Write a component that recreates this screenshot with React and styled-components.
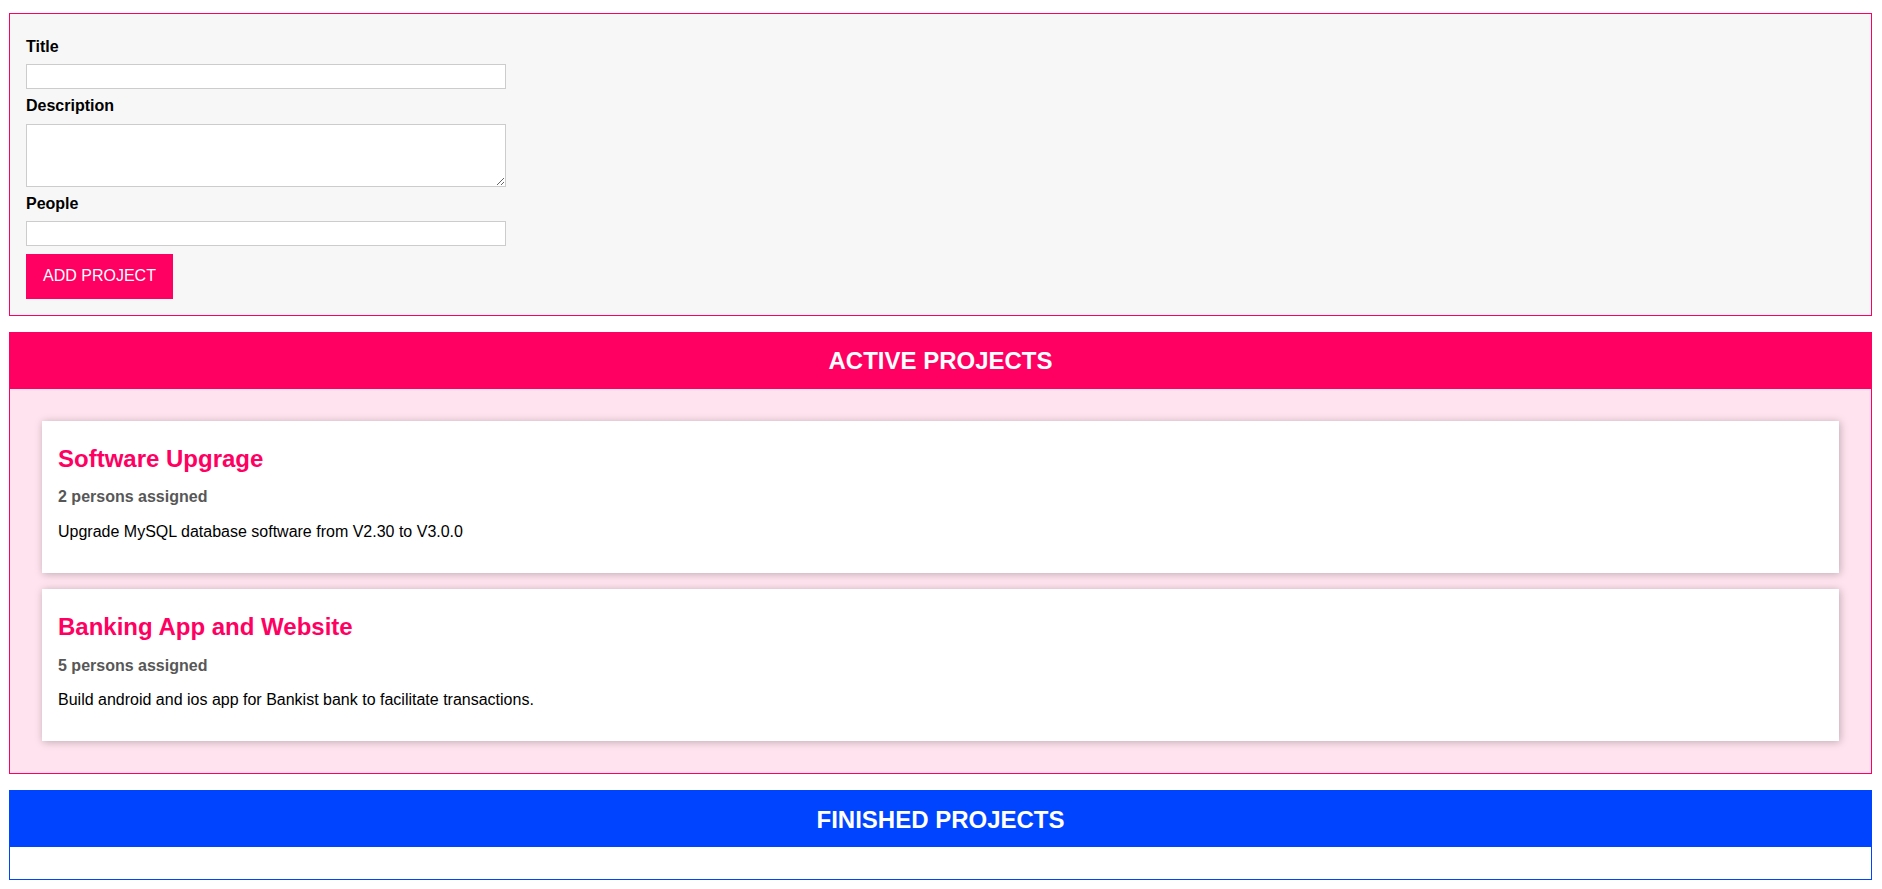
import React from 'react'
import styled, { createGlobalStyle } from 'styled-components'

const GlobalStyle = createGlobalStyle`
    * {
        box-sizing: border-box;
    }
    html {
        font-family: "Liberation Sans", Arial, sans-serif;
        line-height: 1.15;
    }
    body {
        margin: 0;
    }
`

const Page = styled.div`
    display: flex;
    flex-direction: column;
    gap: 16px;
    padding: 13px 10px 16px 9px;
`

const Form = styled.form`
    border: 1px solid #ff0062;
    background: #f7f7f7;
    padding: 16px;
`

const Label = styled.label`
    display: block;
    margin: 8px 0;
    font-weight: bold;
    font-size: 16px;
    line-height: 18.4px;
    color: #000;
`

const Input = styled.input`
    display: block;
    width: 100%;
    max-width: 480px;
    height: 25px;
    margin: 8px 0;
    padding: 3px 6px;
    font: inherit;
    border: 1px solid #ccc;
    background: #fff;
    &:focus {
        outline: none;
        background: #fff5f9;
    }
`

const TextArea = styled.textarea`
    display: block;
    width: 100%;
    max-width: 480px;
    height: 63px;
    margin: 8px 0;
    padding: 3px 6px;
    font: inherit;
    border: 1px solid #ccc;
    background: #fff;
    &:focus {
        outline: none;
        background: #fff5f9;
    }
`

const Button = styled.button`
    display: inline-block;
    vertical-align: top;
    font: inherit;
    font-size: 16px;
    line-height: 18.4px;
    background: #ff0062;
    border: 1px solid #ff0062;
    color: white;
    padding: 12px 16px;
    cursor: pointer;
`

const Section = styled.section`
    border: 1px solid ${props => props.color};
`

const Header = styled.header`
    background: ${props => props.color};
    height: 56px;
    display: flex;
    justify-content: center;
    align-items: center;
`

const Heading = styled.h2`
    margin: 0;
    color: white;
    font-size: 24px;
    font-weight: bold;
`

const List = styled.ul`
    list-style: none;
    margin: 0;
    padding: 16px;
    background: ${props => props.bg};
`

const Card = styled.li`
    background: #fff;
    box-shadow: 1px 1px 8px rgba(0, 0, 0, 0.26);
    padding: 16px;
    margin: 16px;
`

const CardTitle = styled.h2`
    color: #ff0062;
    margin: 8px 0;
    font-size: 24px;
    font-weight: bold;
`

const CardPeople = styled.h3`
    color: #575757;
    font-size: 16px;
    font-weight: bold;
    margin: 16px 0;
`

const CardText = styled.p`
    margin: 16px 0;
    font-size: 16px;
    color: #000;
`

const active = [
    { id: 1, title: 'Software Upgrage', people: 2, text: 'Upgrade MySQL database software from V2.30 to V3.0.0' },
    { id: 2, title: 'Banking App and Website', people: 5, text: 'Build android and ios app for Bankist bank to facilitate transactions.' },
]

function ProjectList({ title, color, bg, items }) {
    return (
        <Section color={color}>
            <Header color={color}>
                <Heading>{title}</Heading>
            </Header>
            <List bg={bg}>
                {items.map(p => (
                    <Card key={p.id}>
                        <CardTitle>{p.title}</CardTitle>
                        <CardPeople>{p.people} persons assigned</CardPeople>
                        <CardText>{p.text}</CardText>
                    </Card>
                ))}
            </List>
        </Section>
    )
}

export default function App() {
    return (
        <Page>
            <GlobalStyle />
            <Form onSubmit={e => e.preventDefault()}>
                <Label htmlFor="title">Title</Label>
                <Input type="text" id="title" />
                <Label htmlFor="description">Description</Label>
                <TextArea id="description" rows={3} />
                <Label htmlFor="people">People</Label>
                <Input type="number" id="people" step="1" min="0" max="10" />
                <Button type="submit">ADD PROJECT</Button>
            </Form>
            <ProjectList title="ACTIVE PROJECTS" color="#ff0062" bg="#ffe3ee" items={active} />
            <ProjectList title="FINISHED PROJECTS" color="#0044ff" bg="#fff" items={[]} />
        </Page>
    )
}
